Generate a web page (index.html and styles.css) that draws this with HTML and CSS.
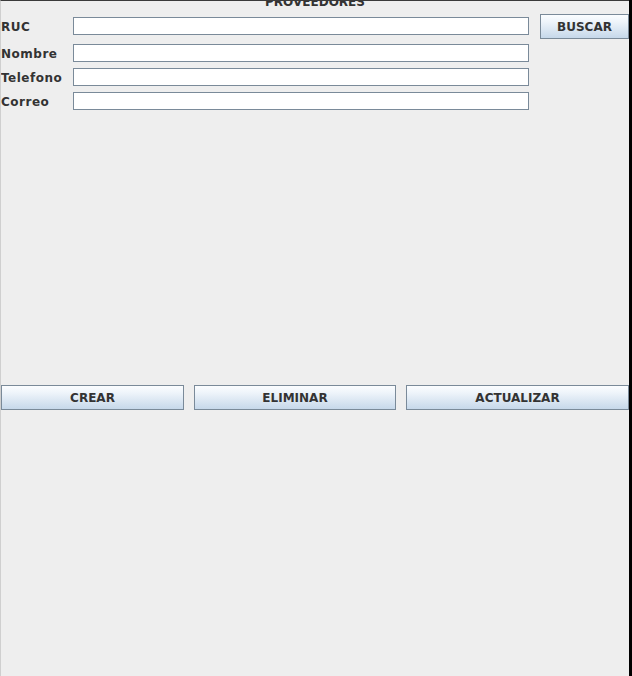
FILE: index.html
```html
<!DOCTYPE html>
<html>
<head>
    <title>Proveedores</title>
    <link rel="stylesheet" href="styles.css">
</head>
<body>
    <div class="frame">
        <div class="title">PROVEEDORES</div>

        <div class="form-grid">
            <label for="ruc">RUC</label>
            <input type="text" id="ruc" class="field">
            <button class="btn btn-buscar">BUSCAR</button>

            <label for="nombre">Nombre</label>
            <input type="text" id="nombre" class="field">
            <span></span>

            <label for="telefono">Telefono</label>
            <input type="text" id="telefono" class="field">
            <span></span>

            <label for="correo">Correo</label>
            <input type="text" id="correo" class="field">
            <span></span>
        </div>

        <div class="actions">
            <button class="btn">CREAR</button>
            <button class="btn">ELIMINAR</button>
            <button class="btn">ACTUALIZAR</button>
        </div>
    </div>
</body>
</html>
```

FILE: styles.css
```css
html, body {
    margin: 0;
    padding: 0;
    background-color: #000;
}
body {
    font-family: 'DejaVu Sans', Verdana, sans-serif;
    font-size: 12px;
    color: #333;
}
.frame {
    width: 628px;
    height: 675px;
    background-color: #eeeeee;
    border-top: 1px solid #3a3a3a;
    border-left: 1px solid #cfcfcf;
    overflow: hidden;
}
.title {
    height: 14px;
    line-height: 14px;
    margin-top: -6px;
    text-align: center;
    font-weight: bold;
    color: #333;
}
.form-grid {
    display: grid;
    grid-template-columns: 72px 456px 100px;
    grid-template-rows: 24px 18px 18px 18px;
    row-gap: 6px;
    margin-top: 5px;
    align-items: center;
}
.form-grid label {
    font-weight: bold;
    letter-spacing: 0.5px;
    padding-top: 2px;
    white-space: nowrap;
}
.field {
    box-sizing: border-box;
    width: 456px;
    height: 18px;
    margin: 0;
    padding: 0 3px;
    border: 1px solid #7a8a99;
    background-color: #fff;
    font-family: inherit;
    font-size: 12px;
    outline: none;
}
.form-grid .field:first-of-type {
    align-self: start;
    margin-top: 3px;
}
.btn {
    box-sizing: border-box;
    height: 25px;
    margin: 0;
    padding: 0;
    border: 1px solid #7a8a99;
    background: linear-gradient(#fbfdff 0%, #eef4fa 30%, #c6d8ea 100%);
    color: #333;
    font-family: inherit;
    font-size: 12px;
    font-weight: bold;
    cursor: pointer;
}
.btn-buscar {
    width: 89px;
    margin-left: 11px;
    align-self: start;
}
.actions {
    display: grid;
    grid-template-columns: 183px 202px 223px;
    column-gap: 10px;
    margin-top: 275px;
}
```
